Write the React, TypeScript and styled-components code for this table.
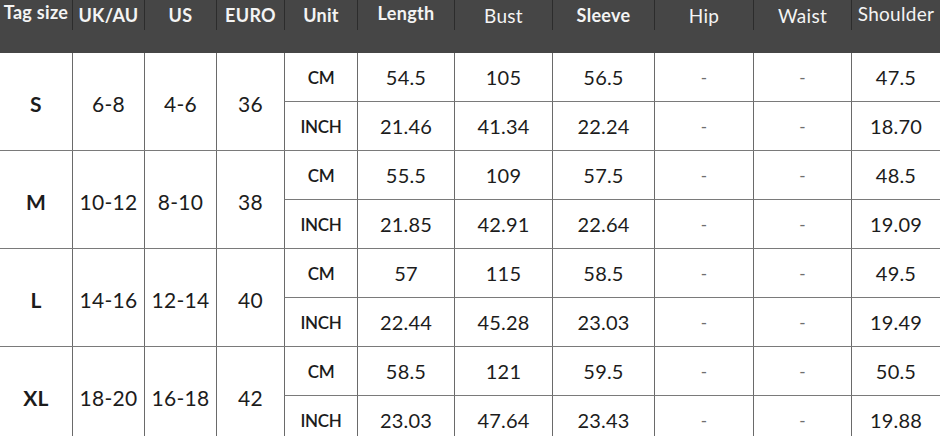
import React from "react";
import styled, { createGlobalStyle } from "styled-components";

const GlobalStyle = createGlobalStyle`
  html, body {
    margin: 0;
    padding: 0;
    background: #ffffff;
    overflow: hidden;
  }
  * {
    box-sizing: border-box;
  }
`;

const COLS = "72px 72px 72px 68px 73px 97px 98px 102px 99px 98px 89px";

const Chart = styled.div`
  width: 940px;
  height: 436px;
  overflow: hidden;
  font-family: Lato, "Open Sans", "Liberation Sans", sans-serif;
  color: #1c1c1c;
`;

const HeaderRow = styled.div`
  display: grid;
  grid-template-columns: ${COLS};
  height: 53px;
  background: #464646;
`;

const HeadCell = styled.div<{ $first?: boolean; $lift?: number }>`
  height: 30px;
  display: flex;
  align-items: center;
  justify-content: center;
  border-left: ${(p) => (p.$first ? "none" : "1px solid #2c2c2c")};
  padding-bottom: ${(p) => p.$lift ?? 0}px;
  white-space: nowrap;
`;

const HeadText = styled.span<{ $weight: number }>`
  color: #f4f4f4;
  font-size: ${(p) => (p.$weight > 500 ? "18px" : "19px")};
  font-weight: ${(p) => p.$weight};
  letter-spacing: 0.3px;
`;

const Group = styled.div`
  display: grid;
  grid-template-columns: ${COLS};
  grid-template-rows: 49px 48px;
  border-bottom: 1px solid #7a7a7a;
`;

const SpanCell = styled.div<{ $first?: boolean; $col: number }>`
  grid-column: ${(p) => p.$col};
  grid-row: 1 / span 2;
  display: flex;
  align-items: center;
  justify-content: center;
  border-left: ${(p) => (p.$first ? "none" : "1px solid #6a6a6a")};
  font-size: 21px;
  font-weight: ${(p) => (p.$first ? 700 : 400)};
  letter-spacing: 0.3px;
  padding-top: 3px;
  white-space: nowrap;
`;

const Cell = styled.div<{ $top?: boolean; $muted?: boolean; $unit?: boolean }>`
  display: flex;
  align-items: center;
  justify-content: center;
  border-left: 1px solid #6a6a6a;
  border-bottom: ${(p) => (p.$top ? "1px solid #7a7a7a" : "none")};
  font-size: ${(p) => (p.$unit ? "17px" : p.$muted ? "17px" : "20px")};
  font-weight: ${(p) => (p.$unit ? 600 : 400)};
  color: ${(p) => (p.$muted ? "#6f6f6f" : "#1c1c1c")};
  letter-spacing: ${(p) => (p.$unit ? "-0.3px" : "0.2px")};
  white-space: nowrap;
`;

type Head = { label: string; weight: number; lift?: number };

const heads: Head[] = [
  { label: "Tag size", weight: 700, lift: 6 },
  { label: "UK/AU", weight: 700 },
  { label: "US", weight: 700 },
  { label: "EURO", weight: 700 },
  { label: "Unit", weight: 700 },
  { label: "Length", weight: 700, lift: 4 },
  { label: "Bust", weight: 400 },
  { label: "Sleeve", weight: 700 },
  { label: "Hip", weight: 400 },
  { label: "Waist", weight: 400 },
  { label: "Shoulder", weight: 400, lift: 4 },
];

type SizeRow = {
  tag: string;
  uk: string;
  us: string;
  euro: string;
  cm: string[];
  inch: string[];
};

const sizes: SizeRow[] = [
  {
    tag: "S",
    uk: "6-8",
    us: "4-6",
    euro: "36",
    cm: ["54.5", "105", "56.5", "-", "-", "47.5"],
    inch: ["21.46", "41.34", "22.24", "-", "-", "18.70"],
  },
  {
    tag: "M",
    uk: "10-12",
    us: "8-10",
    euro: "38",
    cm: ["55.5", "109", "57.5", "-", "-", "48.5"],
    inch: ["21.85", "42.91", "22.64", "-", "-", "19.09"],
  },
  {
    tag: "L",
    uk: "14-16",
    us: "12-14",
    euro: "40",
    cm: ["57", "115", "58.5", "-", "-", "49.5"],
    inch: ["22.44", "45.28", "23.03", "-", "-", "19.49"],
  },
  {
    tag: "XL",
    uk: "18-20",
    us: "16-18",
    euro: "42",
    cm: ["58.5", "121", "59.5", "-", "-", "50.5"],
    inch: ["23.03", "47.64", "23.43", "-", "-", "19.88"],
  },
];

const App: React.FC = () => {
  return (
    <>
      <GlobalStyle />
      <Chart>
        <HeaderRow>
          {heads.map((h, i) => (
            <HeadCell key={h.label} $first={i === 0} $lift={h.lift}>
              <HeadText $weight={h.weight}>{h.label}</HeadText>
            </HeadCell>
          ))}
        </HeaderRow>
        {sizes.map((s) => (
          <Group key={s.tag}>
            <SpanCell $first $col={1}>{s.tag}</SpanCell>
            <SpanCell $col={2}>{s.uk}</SpanCell>
            <SpanCell $col={3}>{s.us}</SpanCell>
            <SpanCell $col={4}>{s.euro}</SpanCell>
            <Cell $top $unit>CM</Cell>
            {s.cm.map((v, i) => (
              <Cell key={"cm" + i} $top $muted={v === "-"}>
                {v}
              </Cell>
            ))}
            <Cell $unit>INCH</Cell>
            {s.inch.map((v, i) => (
              <Cell key={"in" + i} $muted={v === "-"}>
                {v}
              </Cell>
            ))}
          </Group>
        ))}
      </Chart>
    </>
  );
};

export default App;
